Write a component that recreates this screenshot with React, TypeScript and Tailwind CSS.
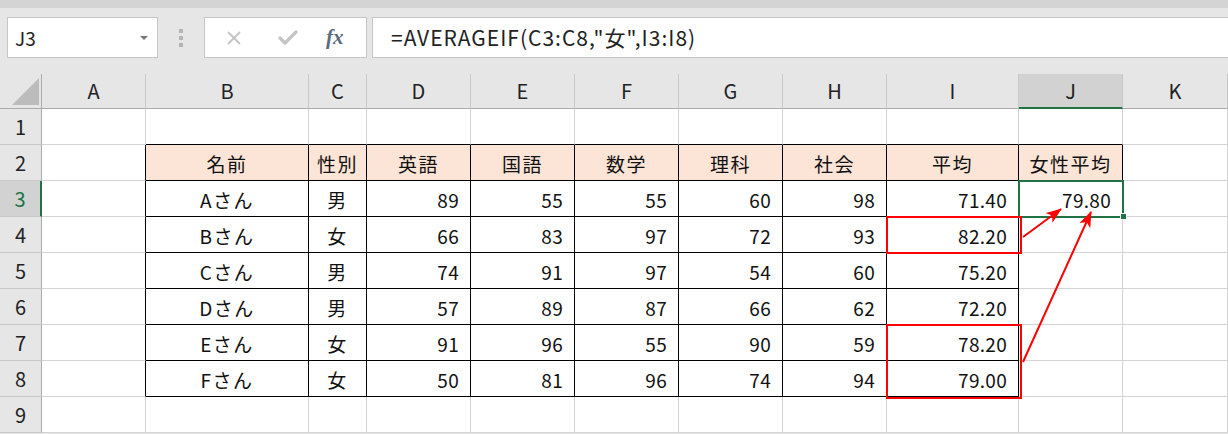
import React from 'react';
import { X, Check } from 'lucide-react';

const colLetters = ['A', 'B', 'C', 'D', 'E', 'F', 'G', 'H', 'I', 'J', 'K'];

// row 2 = header, rows 3-8 = data
const header = ['名前', '性別', '英語', '国語', '数学', '理科', '社会', '平均', '女性平均'];
const data: (string | number)[][] = [
  ['Aさん', '男', 89, 55, 55, 60, 98, '71.40'],
  ['Bさん', '女', 66, 83, 97, 72, 93, '82.20'],
  ['Cさん', '男', 74, 91, 97, 54, 60, '75.20'],
  ['Dさん', '男', 57, 89, 87, 66, 62, '72.20'],
  ['Eさん', '女', 91, 96, 55, 90, 59, '78.20'],
  ['Fさん', '女', 50, 81, 96, 74, 94, '79.00'],
];

const inTable = (r: number, c: number) =>
  (r >= 2 && r <= 8 && c >= 1 && c <= 8) || (c === 9 && (r === 2 || r === 3));

const cellValue = (r: number, c: number): { text: string; align: 'center' | 'right' } | null => {
  if (r === 2 && c >= 1 && c <= 9) return { text: header[c - 1], align: 'center' };
  if (r >= 3 && r <= 8 && c >= 1 && c <= 8) {
    const v = data[r - 3][c - 1];
    return { text: String(v), align: c <= 2 ? 'center' : 'right' };
  }
  if (r === 3 && c === 9) return { text: '79.80', align: 'right' };
  return null;
};

const Cell = ({ r, c }: { r: number; c: number }) => {
  const v = cellValue(r, c);
  const right = inTable(r, c) || inTable(r, c + 1) ? 'border-r-black' : 'border-r-[#d4d4d4]';
  const bottom = inTable(r, c) || inTable(r + 1, c) ? 'border-b-black' : 'border-b-[#d4d4d4]';
  const bg = r === 2 && c >= 1 && c <= 9 ? 'bg-[#fce4d6]' : 'bg-white';
  const align = v?.align === 'right' ? 'justify-end pr-[11px] tracking-[0.3px]' : 'justify-center tracking-[1.5px]';
  return (
    <div className={`h-[36px] border-r border-b ${right} ${bottom} ${bg} flex items-center ${align} text-[19px] text-[#111] leading-none pt-[2px]`}>
      {v?.text}
    </div>
  );
};

export default function App() {
  const rows = [1, 2, 3, 4, 5, 6, 7, 8, 9];
  return (
    <div
      className="relative w-[1228px] h-[434px] overflow-hidden bg-[#e6e6e6]"
      style={{ fontFamily: '"Noto Sans CJK JP", "Noto Sans", sans-serif' }}
    >
      <div className="h-[8px] bg-[#d4d4d4]" />
      {/* formula bar */}
      <div className="flex items-center pt-[9px] pb-[16px]">
        <div className="ml-[7px] w-[151px] h-[41px] bg-white border border-[#c6c6c6] flex items-center justify-between pl-[7px] pr-[9px]">
          <span className="text-[19px] text-[#222] leading-none">J3</span>
          <span className="w-0 h-0 border-l-[4px] border-r-[4px] border-t-[4px] border-l-transparent border-r-transparent border-t-[#777]" />
        </div>
        <div className="w-[46px] flex flex-col items-center gap-[3px]">
          <span className="w-[4px] h-[4px] bg-[#b4b4b4]" />
          <span className="w-[4px] h-[4px] bg-[#b4b4b4]" />
          <span className="w-[4px] h-[4px] bg-[#b4b4b4]" />
        </div>
        <div className="w-[163px] h-[41px] bg-white border border-[#c6c6c6] flex items-center">
          <X className="ml-[18px] w-[22px] h-[22px] text-[#c4c4c4]" strokeWidth={2} />
          <Check className="ml-[31px] w-[24px] h-[24px] text-[#c4c4c4]" strokeWidth={3.2} />
          <span
            className="ml-[26px] text-[21px] italic font-bold text-[#5b6b82] leading-none"
            style={{ fontFamily: '"Liberation Serif", serif' }}
          >
            fx
          </span>
        </div>
        <div className="ml-[5px] flex-1 h-[41px] bg-white border border-r-0 border-[#c6c6c6] flex items-center pl-[18px]">
          <span className="text-[21px] text-[#222] leading-none tracking-[1px]">=AVERAGEIF(C3:C8,"女",I3:I8)</span>
        </div>
      </div>

      {/* sheet */}
      <div className="grid grid-cols-[42px_104px_163px_58px_104px_104px_104px_104px_104px_132px_104px_105px]">
        {/* column headers */}
        <div className="relative h-[35px] border-r border-b border-[#ababab] bg-[#e6e6e6]">
          <svg className="absolute left-0 top-0" width="42" height="35">
            <polygon points="12,31 39,4 39,31" fill="#bcbcbc" />
          </svg>
        </div>
        {colLetters.map((l, i) => (
          <div
            key={l}
            className={
              i === 9
                ? 'h-[35px] border-r border-r-[#c8c8c8] border-b-2 border-b-[#217346] bg-[#d2d2d2] flex items-center justify-center text-[20px] text-[#222] leading-none'
                : 'h-[35px] border-r border-r-[#c8c8c8] border-b border-b-[#ababab] bg-[#e6e6e6] flex items-center justify-center text-[20px] text-[#222] leading-none'
            }
          >
            {l}
          </div>
        ))}

        {rows.map((r) => (
          <React.Fragment key={r}>
            <div
              className={
                r === 3
                  ? 'h-[36px] border-r-2 border-r-[#217346] border-b border-b-[#c8c8c8] bg-[#d2d2d2] flex items-center justify-center text-[20px] text-[#217346] leading-none'
                  : 'h-[36px] border-r border-r-[#ababab] border-b border-b-[#c8c8c8] bg-[#e6e6e6] flex items-center justify-center text-[20px] text-[#222] leading-none'
              }
            >
              {r}
            </div>
            {colLetters.map((_, c) => (
              <Cell key={c} r={r} c={c} />
            ))}
          </React.Fragment>
        ))}
      </div>

      {/* selection on J3 */}
      <div className="absolute left-[1018px] top-[180px] w-[106px] h-[38px] border-2 border-[#217346] pointer-events-none" />
      <div className="absolute left-[1120px] top-[213px] w-[7px] h-[7px] bg-[#217346] border border-white pointer-events-none" />

      {/* red highlight boxes */}
      <div className="absolute left-[886px] top-[216px] w-[136px] h-[38px] border-2 border-[#ff0000] pointer-events-none" />
      <div className="absolute left-[886px] top-[324px] w-[136px] h-[75px] border-2 border-[#ff0000] pointer-events-none" />

      {/* arrows */}
      <svg className="absolute left-0 top-0 pointer-events-none" width="1228" height="434">
        <defs>
          <marker id="ah" markerUnits="userSpaceOnUse" markerWidth="16" markerHeight="12" refX="15" refY="6" orient="auto">
            <path d="M0,0 L16,6 L0,12 L4,6 z" fill="#ff0000" />
          </marker>
        </defs>
        <line x1="1023" y1="237" x2="1061" y2="209" stroke="#ff0000" strokeWidth="2" markerEnd="url(#ah)" />
        <line x1="1023" y1="362" x2="1091" y2="212" stroke="#ff0000" strokeWidth="2" markerEnd="url(#ah)" />
      </svg>
    </div>
  );
}
